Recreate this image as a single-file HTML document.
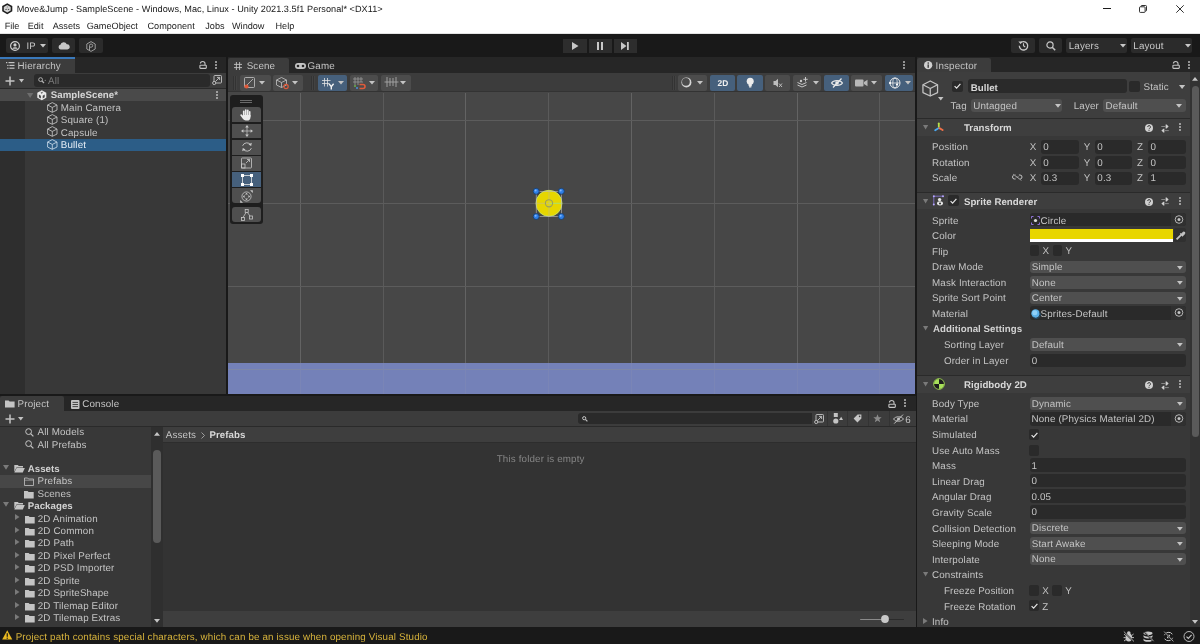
<!DOCTYPE html>
<html><head><meta charset="utf-8">
<style>
*{box-sizing:border-box}
html,body{margin:0;padding:0}
body{width:1200px;height:644px;position:relative;overflow:hidden;background:#191919;font-family:"Liberation Sans",sans-serif;color:#c4c4c4;font-size:10px;text-rendering:geometricPrecision}
.a{position:absolute}
.t{position:absolute;white-space:pre;line-height:1}
svg{position:absolute;overflow:visible}
</style></head><body><div id="root" style="position:absolute;left:0;top:0;width:1200px;height:644px;will-change:transform">
<div class="a" style="left:0px;top:0px;width:1200px;height:34px;background:#ffffff;"></div>
<div class="a" style="left:0px;top:33px;width:1200px;height:1px;background:#e3e3e3;"></div>
<svg style="left:2.2px;top:2.8px;" width="10.5" height="11.4" viewBox="0 0 10.5 11.4"><path d="M5.25 0.2L10.3 3.05V8.35L5.25 11.2L0.2 8.35V3.05Z" fill="#1e1e1e"/><path d="M5.25 1.9L8.7 3.9V7.5L5.25 9.5L1.8 7.5V3.9Z" fill="#d4d4d4"/><path d="M5.25 2.9L5.9 4.4H4.6Z" fill="#6a6a6a"/><path d="M2.9 6.2L4.6 5.8V7Z M7.6 6.2L5.9 5.8V7Z" fill="#2a2a2a"/></svg>
<div class="t" style="left:16.7px;top:5px;font-size:9.15px;color:#161616;letter-spacing:0.05px;">Move&amp;Jump - SampleScene - Windows, Mac, Linux - Unity 2021.3.5f1 Personal* &lt;DX11&gt;</div>
<div class="t" style="left:4.7px;top:22px;font-size:9.15px;color:#1b1b1b;">File</div>
<div class="t" style="left:27.7px;top:22px;font-size:9.15px;color:#1b1b1b;">Edit</div>
<div class="t" style="left:52.7px;top:22px;font-size:9.15px;color:#1b1b1b;">Assets</div>
<div class="t" style="left:86.7px;top:22px;font-size:9.15px;color:#1b1b1b;">GameObject</div>
<div class="t" style="left:147.5px;top:22px;font-size:9.15px;color:#1b1b1b;">Component</div>
<div class="t" style="left:205.3px;top:22px;font-size:9.15px;color:#1b1b1b;">Jobs</div>
<div class="t" style="left:232px;top:22px;font-size:9.15px;color:#1b1b1b;">Window</div>
<div class="t" style="left:275.5px;top:22px;font-size:9.15px;color:#1b1b1b;">Help</div>
<div class="a" style="left:1103px;top:8px;width:8px;height:1px;background:#1b1b1b;"></div>
<svg style="left:1139px;top:5px;" width="8" height="8" viewBox="0 0 8 8"><rect x="0.5" y="1.8" width="5.6" height="5.6" rx="0.8" fill="none" stroke="#1b1b1b" stroke-width="0.9"/><path d="M2 1.6V1.4A0.9 0.9 0 0 1 2.9 0.5H6.6A0.9 0.9 0 0 1 7.5 1.4V5.2A0.9 0.9 0 0 1 6.6 6.1H6.4" fill="none" stroke="#1b1b1b" stroke-width="0.9"/></svg>
<svg style="left:1176px;top:5px;" width="8" height="8" viewBox="0 0 8 8"><path d="M0.3 0.3L7.7 7.7M7.7 0.3L0.3 7.7" stroke="#1b1b1b" stroke-width="0.9"/></svg>
<div class="a" style="left:0px;top:34px;width:1200px;height:23px;background:#191919;"></div>
<div class="a" style="left:6px;top:38px;width:42px;height:15px;background:#2b2b2b;border-radius:2px"></div>
<div class="a" style="left:52px;top:38px;width:23px;height:15px;background:#2b2b2b;border-radius:2px"></div>
<div class="a" style="left:79px;top:38px;width:23.5px;height:15px;background:#2b2b2b;border-radius:2px"></div>
<svg style="left:10px;top:40.5px;" width="10" height="10" viewBox="0 0 10 10"><circle cx="5" cy="5" r="4.4" fill="none" stroke="#cfcfcf" stroke-width="1.2"/><circle cx="5" cy="3.9" r="1.6" fill="#cfcfcf"/><path d="M2.3 7.4A2.9 2 0 0 1 7.7 7.4V7.8H2.3Z" fill="#cfcfcf"/></svg>
<div class="t" style="left:26.5px;top:42px;font-size:9.5px;color:#c8c8c8;">IP</div>
<svg style="left:40px;top:44px;" width="6" height="3.5" viewBox="0 0 6 3.5"><path d="M0 0H6L3.0 3.5Z" fill="#c8c8c8"/></svg>
<svg style="left:58px;top:41px;" width="12" height="9" viewBox="0 0 12 9"><path d="M2.6 8.4A2.4 2.4 0 0 1 2.4 3.7A3.4 3.4 0 0 1 8.8 3.2A2.6 2.6 0 0 1 9.4 8.4Z" fill="#c8c8c8"/></svg>
<svg style="left:85.5px;top:40.5px;" width="10" height="11" viewBox="0 0 10 11"><path d="M5 0.6L9.2 3V8L5 10.4L0.8 8V3Z" fill="none" stroke="#a8a8a8" stroke-width="0.9"/><path d="M3.5 9.2V4.6A1.6 1.6 0 1 1 5.1 6.2H4" fill="none" stroke="#a8a8a8" stroke-width="0.9"/></svg>
<div class="a" style="left:563px;top:38.5px;width:24px;height:14px;background:#2d2d2d;"></div>
<div class="a" style="left:588.5px;top:38.5px;width:23.5px;height:14px;background:#2d2d2d;"></div>
<div class="a" style="left:614px;top:38.5px;width:23px;height:14px;background:#2d2d2d;"></div>
<svg style="left:572px;top:42px;" width="7" height="8" viewBox="0 0 7 8"><path d="M0 0L6.5 4L0 8Z" fill="#c8c8c8"/></svg>
<div class="a" style="left:597px;top:42px;width:2px;height:8px;background:#c8c8c8;"></div>
<div class="a" style="left:601.3px;top:42px;width:2px;height:8px;background:#c8c8c8;"></div>
<svg style="left:621px;top:42px;" width="8" height="8" viewBox="0 0 8 8"><path d="M0 0L5.5 4L0 8Z" fill="#c8c8c8"/><rect x="6" y="0" width="1.8" height="8" fill="#c8c8c8"/></svg>
<div class="a" style="left:1011.3px;top:38px;width:23.7px;height:14.7px;background:#2b2b2b;border-radius:2px"></div>
<div class="a" style="left:1038.8px;top:38px;width:23.2px;height:14.7px;background:#2b2b2b;border-radius:2px"></div>
<div class="a" style="left:1066.3px;top:38px;width:61.2px;height:14.7px;background:#2b2b2b;border-radius:2px"></div>
<div class="a" style="left:1130.8px;top:38px;width:61.7px;height:14.7px;background:#2b2b2b;border-radius:2px"></div>
<svg style="left:1017.5px;top:40px;" width="11" height="11" viewBox="0 0 11 11"><path d="M2.2 3.2A4.2 4.2 0 1 1 1.3 5.8" fill="none" stroke="#c8c8c8" stroke-width="1.3"/><path d="M0.4 1.4L2.6 4L4.4 1.6Z" fill="#c8c8c8"/><path d="M5.5 3.2V5.8L7.2 7" fill="none" stroke="#c8c8c8" stroke-width="1.1"/></svg>
<svg style="left:1046px;top:40.5px;" width="10" height="10" viewBox="0 0 10 10"><circle cx="4" cy="4" r="3.1" fill="none" stroke="#c8c8c8" stroke-width="1.2"/><path d="M6.2 6.2L9.2 9.2" stroke="#c8c8c8" stroke-width="1.5"/></svg>
<div class="t" style="left:1068.7px;top:42px;font-size:9.8px;color:#c8c8c8;letter-spacing:0.15px;">Layers</div>
<svg style="left:1119.5px;top:44px;" width="6" height="3.5" viewBox="0 0 6 3.5"><path d="M0 0H6L3.0 3.5Z" fill="#c8c8c8"/></svg>
<div class="t" style="left:1133.3px;top:42px;font-size:9.8px;color:#c8c8c8;letter-spacing:0.15px;">Layout</div>
<svg style="left:1184.5px;top:44px;" width="6" height="3.5" viewBox="0 0 6 3.5"><path d="M0 0H6L3.0 3.5Z" fill="#c8c8c8"/></svg>
<div class="a" style="left:0px;top:57px;width:226px;height:337px;background:#383838;"></div>
<div class="a" style="left:0px;top:57px;width:226px;height:16px;background:#262626;"></div>
<div class="a" style="left:0px;top:59px;width:75px;height:14px;background:#3c3c3c;"></div>
<div class="a" style="left:0px;top:57px;width:75px;height:2px;background:#3a79bb;"></div>
<svg style="left:5.5px;top:62px;" width="8.5" height="7" viewBox="0 0 8.5 7"><g fill="#c4c4c4"><rect x="0" y="0" width="1.3" height="1.2"/><rect x="2.5" y="0" width="6" height="1.2"/><rect x="1.2" y="2.8" width="1.3" height="1.2"/><rect x="3.4" y="2.8" width="5.1" height="1.2"/><rect x="1.2" y="5.6" width="1.3" height="1.2"/><rect x="3.4" y="5.6" width="5.1" height="1.2"/></g></svg>
<div class="t" style="left:17.6px;top:62px;font-size:9.8px;color:#c4c4c4;letter-spacing:0.15px;">Hierarchy</div>
<svg style="left:198.5px;top:60.5px;" width="8" height="8" viewBox="0 0 8 8"><path d="M1.4 2.6A2.3 2.1 0 0 1 6 2.6V4" fill="none" stroke="#c4c4c4" stroke-width="1.1"/><rect x="0.9" y="4.2" width="6.4" height="3.2" rx="0.6" fill="none" stroke="#c4c4c4" stroke-width="1.1"/></svg>
<svg style="left:214.8px;top:60.5px;" width="2" height="8" viewBox="0 0 2 8"><circle cx="1" cy="1" r="0.95" fill="#c4c4c4"/><circle cx="1" cy="4" r="0.95" fill="#c4c4c4"/><circle cx="1" cy="7" r="0.95" fill="#c4c4c4"/></svg>
<div class="a" style="left:0px;top:73px;width:226px;height:15px;background:#3c3c3c;"></div>
<svg style="left:5.4px;top:75.5px;" width="10" height="10" viewBox="0 0 10 10"><path d="M5 0.5V9.5M0.5 5H9.5" stroke="#c4c4c4" stroke-width="1.5"/></svg>
<svg style="left:18.6px;top:79px;" width="5" height="3.5" viewBox="0 0 5 3.5"><path d="M0 0H5L2.5 3.5Z" fill="#c4c4c4"/></svg>
<div class="a" style="left:33.5px;top:74.2px;width:176.5px;height:12.5px;background:#2a2a2a;border-radius:3px"></div>
<svg style="left:37.5px;top:77.3px;" width="8" height="7" viewBox="0 0 8 7"><circle cx="2.6" cy="2.6" r="1.9" fill="none" stroke="#b0b0b0" stroke-width="1"/><path d="M4 4L6 6" stroke="#b0b0b0" stroke-width="1.2"/><circle cx="7.2" cy="3.2" r="0.5" fill="#b0b0b0"/></svg>
<div class="t" style="left:48px;top:77px;font-size:9.8px;color:#7b7b7b;letter-spacing:0.15px;">All</div>
<svg style="left:212px;top:75.3px;" width="10" height="10" viewBox="0 0 10 10"><rect x="2" y="0.5" width="7.5" height="7.5" rx="0.8" fill="none" stroke="#c4c4c4" stroke-width="0.9"/><circle cx="2.2" cy="8" r="1.6" fill="#3c3c3c" stroke="#c4c4c4" stroke-width="0.9"/><path d="M3.4 6.6L7.4 2.6M5 2.4H7.6V5" fill="none" stroke="#c4c4c4" stroke-width="0.9"/></svg>
<div class="a" style="left:0px;top:88px;width:25px;height:306px;background:#2e2e2e;"></div>
<div class="a" style="left:0px;top:88px;width:226px;height:0.8px;background:#2a2a2a;"></div>
<div class="a" style="left:0px;top:88.7px;width:226px;height:12.1px;background:#4a4a4a;"></div>
<svg style="left:26.7px;top:92.8px;" width="6.3" height="5" viewBox="0 0 6.3 5"><path d="M0 0H6.3L3.15 5Z" fill="#6e6e6e"/></svg>
<svg style="left:36.7px;top:89.5px;" width="9.6" height="10.5" viewBox="0 0 9.6 10.5"><path d="M4.8 0.3L9.3 2.8V7.8L4.8 10.3L0.3 7.8V2.8Z" fill="#ececec"/><path d="M3.4 1.6L4.8 2.6L6.2 1.6L4.8 3.9Z" fill="#474747"/><path d="M1.9 4.6L3.9 5.8V8.4L1.9 7.2Z" fill="#474747"/><path d="M7.7 4.6L5.7 5.8V8.4L7.7 7.2Z" fill="#474747"/></svg>
<div class="t" style="left:50.7px;top:91px;font-size:9.7px;color:#d6d6d6;font-weight:bold;letter-spacing:0.05px;">SampleScene*</div>
<svg style="left:215.7px;top:90.5px;" width="2" height="8" viewBox="0 0 2 8"><circle cx="1" cy="1" r="0.95" fill="#c4c4c4"/><circle cx="1" cy="4" r="0.95" fill="#c4c4c4"/><circle cx="1" cy="7" r="0.95" fill="#c4c4c4"/></svg>
<div class="a" style="left:0px;top:138.7px;width:226px;height:12.4px;background:#2c5d87;"></div>
<svg style="left:47.3px;top:101.5px;" width="10.6" height="10.6" viewBox="0 0 10.6 10.6"><g transform="scale(1.0095238095238095)" fill="none" stroke="#c4c4c4" stroke-width="0.85" stroke-linejoin="round"><path d="M5.25 0.6L9.9 3V8L5.25 10.2L0.6 8V3Z"/><path d="M0.6 3L5.25 5.4L9.9 3M5.25 5.4V10.2"/></g></svg>
<div class="t" style="left:60.85px;top:104px;font-size:9.8px;color:#c4c4c4;letter-spacing:0.12px;">Main Camera</div>
<svg style="left:47.3px;top:113.95px;" width="10.6" height="10.6" viewBox="0 0 10.6 10.6"><g transform="scale(1.0095238095238095)" fill="none" stroke="#c4c4c4" stroke-width="0.85" stroke-linejoin="round"><path d="M5.25 0.6L9.9 3V8L5.25 10.2L0.6 8V3Z"/><path d="M0.6 3L5.25 5.4L9.9 3M5.25 5.4V10.2"/></g></svg>
<div class="t" style="left:60.85px;top:116px;font-size:9.8px;color:#c4c4c4;letter-spacing:0.12px;">Square (1)</div>
<svg style="left:47.3px;top:126.39999999999999px;" width="10.6" height="10.6" viewBox="0 0 10.6 10.6"><g transform="scale(1.0095238095238095)" fill="none" stroke="#c4c4c4" stroke-width="0.85" stroke-linejoin="round"><path d="M5.25 0.6L9.9 3V8L5.25 10.2L0.6 8V3Z"/><path d="M0.6 3L5.25 5.4L9.9 3M5.25 5.4V10.2"/></g></svg>
<div class="t" style="left:60.85px;top:129px;font-size:9.8px;color:#c4c4c4;letter-spacing:0.12px;">Capsule</div>
<svg style="left:47.3px;top:138.85000000000002px;" width="10.6" height="10.6" viewBox="0 0 10.6 10.6"><g transform="scale(1.0095238095238095)" fill="none" stroke="#c8d8e8" stroke-width="0.85" stroke-linejoin="round"><path d="M5.25 0.6L9.9 3V8L5.25 10.2L0.6 8V3Z"/><path d="M0.6 3L5.25 5.4L9.9 3M5.25 5.4V10.2"/></g></svg>
<div class="t" style="left:60.85px;top:141px;font-size:9.8px;color:#e6eef6;letter-spacing:0.12px;">Bullet</div>
<div class="a" style="left:227.5px;top:57px;width:687.5px;height:337px;background:#474747;"></div>
<div class="a" style="left:227.5px;top:57px;width:687.5px;height:16px;background:#262626;"></div>
<div class="a" style="left:228px;top:58px;width:61px;height:15px;background:#3c3c3c;border-radius:2px 2px 0 0"></div>
<svg style="left:234.3px;top:62px;" width="8" height="8" viewBox="0 0 8 8"><path d="M2.4 0V8M5.6 0V8M0 2.4H8M0 5.6H8" stroke="#c4c4c4" stroke-width="0.9"/></svg>
<div class="t" style="left:246.7px;top:62px;font-size:9.8px;color:#c4c4c4;letter-spacing:0.15px;">Scene</div>
<svg style="left:294.5px;top:62.5px;" width="11" height="6" viewBox="0 0 11 6"><rect x="0" y="0" width="11" height="6" rx="3" fill="#c4c4c4"/><circle cx="3" cy="3" r="1.3" fill="#262626"/><circle cx="8" cy="3" r="1.3" fill="#262626"/></svg>
<div class="t" style="left:307.6px;top:62px;font-size:9.8px;color:#c4c4c4;letter-spacing:0.15px;">Game</div>
<svg style="left:902.8px;top:60.5px;" width="2" height="8" viewBox="0 0 2 8"><circle cx="1" cy="1" r="0.95" fill="#c4c4c4"/><circle cx="1" cy="4" r="0.95" fill="#c4c4c4"/><circle cx="1" cy="7" r="0.95" fill="#c4c4c4"/></svg>
<div class="a" style="left:227.5px;top:73px;width:687.5px;height:18.5px;background:#3c3c3c;"></div>
<div class="a" style="left:227.5px;top:91px;width:687.5px;height:1px;background:#333333;"></div>
<svg style="left:232.5px;top:75.5px;" width="4" height="14" viewBox="0 0 4 14"><path d="M0.5 0V14M2.5 0V14" stroke="#2e2e2e" stroke-width="0.8"/><path d="M1.3 0V14M3.3 0V14" stroke="#4a4a4a" stroke-width="0.6"/></svg>
<svg style="left:310.5px;top:75.5px;" width="4" height="14" viewBox="0 0 4 14"><path d="M0.5 0V14M2.5 0V14" stroke="#2e2e2e" stroke-width="0.8"/><path d="M1.3 0V14M3.3 0V14" stroke="#4a4a4a" stroke-width="0.6"/></svg>
<svg style="left:671.5px;top:75.5px;" width="4" height="14" viewBox="0 0 4 14"><path d="M0.5 0V14M2.5 0V14" stroke="#2e2e2e" stroke-width="0.8"/><path d="M1.3 0V14M3.3 0V14" stroke="#4a4a4a" stroke-width="0.6"/></svg>
<div class="a" style="left:240.3px;top:75px;width:30.4px;height:15.5px;background:#4c4c4c;border-radius:2px"></div>
<svg style="left:259.0px;top:81px;" width="6" height="3.6" viewBox="0 0 6 3.6"><path d="M0 0H6L3.0 3.6Z" fill="#c4c4c4"/></svg>
<div class="a" style="left:273px;top:75px;width:30px;height:15.5px;background:#4c4c4c;border-radius:2px"></div>
<svg style="left:292.3px;top:81px;" width="6" height="3.6" viewBox="0 0 6 3.6"><path d="M0 0H6L3.0 3.6Z" fill="#c4c4c4"/></svg>
<div class="a" style="left:318px;top:75px;width:29px;height:15.5px;background:#46607c;border-radius:2px"></div>
<svg style="left:338.2px;top:81px;" width="6" height="3.6" viewBox="0 0 6 3.6"><path d="M0 0H6L3.0 3.6Z" fill="#c4c4c4"/></svg>
<div class="a" style="left:349.6px;top:75px;width:28.4px;height:15.5px;background:#4c4c4c;border-radius:2px"></div>
<svg style="left:369.4px;top:81px;" width="6" height="3.6" viewBox="0 0 6 3.6"><path d="M0 0H6L3.0 3.6Z" fill="#c4c4c4"/></svg>
<div class="a" style="left:380.8px;top:75px;width:30.1px;height:15.5px;background:#4c4c4c;border-radius:2px"></div>
<svg style="left:400.00000000000006px;top:81px;" width="6" height="3.6" viewBox="0 0 6 3.6"><path d="M0 0H6L3.0 3.6Z" fill="#c4c4c4"/></svg>
<svg style="left:243.5px;top:76.5px;" width="13" height="12" viewBox="0 0 13 12"><rect x="0.5" y="0.5" width="10" height="10" rx="1" fill="none" stroke="#c4c4c4" stroke-width="0.8"/><path d="M3 8L9 2" stroke="#c4c4c4" stroke-width="0.8"/><circle cx="2.5" cy="9.5" r="2.1" fill="#e05a3a"/></svg>
<svg style="left:276px;top:76.5px;" width="14" height="12" viewBox="0 0 14 12"><path d="M5.5 0.5L10.5 3V8L5.5 10.5L0.5 8V3Z" fill="none" stroke="#c4c4c4" stroke-width="0.8"/><path d="M0.5 3L5.5 5.5L10.5 3M5.5 5.5V10.5" fill="none" stroke="#c4c4c4" stroke-width="0.8"/><circle cx="10" cy="9.5" r="2.2" fill="none" stroke="#e05a3a" stroke-width="1.2"/></svg>
<svg style="left:321.5px;top:77.5px;" width="13" height="12" viewBox="0 0 13 12"><path d="M2.5 0V8.5M5.5 0V8.5M0 2.5H8.5M0 5.5H7" stroke="#e8e8e8" stroke-width="0.75"/><path d="M7 5.8L9.3 8.6L11.6 5.8M9.3 8.6V11.6" fill="none" stroke="#f4f4f4" stroke-width="1.4"/></svg>
<svg style="left:352.5px;top:76.5px;" width="14" height="12" viewBox="0 0 14 12"><path d="M2 0V8M5 0V8M8 0V5M0 2H10M0 5H10" stroke="#9a9a9a" stroke-width="0.8"/><path d="M6.5 7.5H10A2 2 0 0 1 10 11.5H6.5" fill="none" stroke="#e05a3a" stroke-width="1.6"/><circle cx="2" cy="9" r="1" fill="#6ab04c"/><circle cx="4" cy="11" r="1" fill="#4a8fd8"/></svg>
<svg style="left:383.5px;top:77px;" width="15" height="10" viewBox="0 0 15 10"><path d="M0.5 5H14.5M3 0V10M6 1V9M9 1V9M12 0V10" stroke="#a8a8a8" stroke-width="0.9"/></svg>
<div class="a" style="left:677.9px;top:75px;width:29.6px;height:15.5px;background:#4c4c4c;border-radius:2px"></div>
<svg style="left:697.2px;top:81px;" width="6" height="3.6" viewBox="0 0 6 3.6"><path d="M0 0H6L3.0 3.6Z" fill="#c4c4c4"/></svg>
<div class="a" style="left:710px;top:75px;width:25px;height:15.5px;background:#46607c;border-radius:2px"></div>
<div class="a" style="left:736.7px;top:75px;width:26px;height:15.5px;background:#46607c;border-radius:2px"></div>
<div class="a" style="left:765.4px;top:75px;width:24.4px;height:15.5px;background:#4c4c4c;border-radius:2px"></div>
<div class="a" style="left:792.5px;top:75px;width:28.5px;height:15.5px;background:#4c4c4c;border-radius:2px"></div>
<svg style="left:812.8px;top:81px;" width="6" height="3.6" viewBox="0 0 6 3.6"><path d="M0 0H6L3.0 3.6Z" fill="#c4c4c4"/></svg>
<div class="a" style="left:824px;top:75px;width:24.75px;height:15.5px;background:#46607c;border-radius:2px"></div>
<div class="a" style="left:851px;top:75px;width:30.5px;height:15.5px;background:#4c4c4c;border-radius:2px"></div>
<svg style="left:871.2px;top:81px;" width="6" height="3.6" viewBox="0 0 6 3.6"><path d="M0 0H6L3.0 3.6Z" fill="#c4c4c4"/></svg>
<div class="a" style="left:884.6px;top:75px;width:28.1px;height:15.5px;background:#46607c;border-radius:2px"></div>
<svg style="left:904.5px;top:81px;" width="6" height="3.6" viewBox="0 0 6 3.6"><path d="M0 0H6L3.0 3.6Z" fill="#c4c4c4"/></svg>
<svg style="left:680.8px;top:77px;" width="11" height="11" viewBox="0 0 11 11"><circle cx="5.4" cy="5.4" r="5" fill="#d6d6d6"/><circle cx="4.9" cy="4.8" r="3.9" fill="#4c4c4c"/></svg>
<div class="t" style="left:717.6px;top:79px;font-size:8.4px;color:#f0f0f0;font-weight:bold;">2D</div>
<svg style="left:745.5px;top:77px;" width="9" height="12" viewBox="0 0 9 12"><circle cx="4.2" cy="4.2" r="3.5" fill="#ececec"/><path d="M2.6 6.6H5.8V8.4A1.6 1.2 0 0 1 2.6 8.4Z" fill="#ececec"/><rect x="3" y="9.3" width="2.4" height="1.1" rx="0.5" fill="#ececec"/></svg>
<svg style="left:773px;top:77.5px;" width="10" height="10" viewBox="0 0 10 10"><path d="M0.5 3H2.5L5 0.8V9.2L2.5 7H0.5Z" fill="#bdbdbd"/><path d="M6 5.5L9 9M9 5.5L6 9" stroke="#bdbdbd" stroke-width="1"/></svg>
<svg style="left:797px;top:77px;" width="12" height="11" viewBox="0 0 12 11"><path d="M0.5 5.5L5 7.5L9.5 5.5M0.5 8L5 10L9.5 8" fill="none" stroke="#c8c8c8" stroke-width="1"/><path d="M8.5 0V4.5M6.3 2.3H10.7" stroke="#c8c8c8" stroke-width="1"/><circle cx="4" cy="4" r="1.2" fill="#c8c8c8"/></svg>
<svg style="left:830.5px;top:77.5px;" width="12" height="10" viewBox="0 0 12 10"><path d="M0.5 5C2.5 1.8 9.5 1.8 11.5 5C9.5 8.2 2.5 8.2 0.5 5Z" fill="none" stroke="#eaeaea" stroke-width="1.1"/><circle cx="6" cy="5" r="1.8" fill="#eaeaea"/><path d="M2 9.5L10.5 0.5" stroke="#eaeaea" stroke-width="1.2"/></svg>
<svg style="left:855px;top:78.5px;" width="13" height="8" viewBox="0 0 13 8"><rect x="0" y="0.5" width="8.5" height="7" rx="1" fill="#b8b8b8"/><path d="M9 3L12.5 0.8V7.2L9 5Z" fill="#b8b8b8"/></svg>
<svg style="left:888.5px;top:76.5px;" width="13" height="13" viewBox="0 0 13 13"><circle cx="6" cy="6" r="5" fill="none" stroke="#eaeaea" stroke-width="1"/><ellipse cx="6" cy="6" rx="2.2" ry="5" fill="none" stroke="#eaeaea" stroke-width="0.8"/><path d="M1 6H11" stroke="#eaeaea" stroke-width="0.8"/><circle cx="1" cy="6" r="1.1" fill="#fff"/><circle cx="8" cy="7.5" r="1.1" fill="#fff"/></svg>
<div class="a" style="left:300px;top:92.5px;width:1px;height:270.5px;background:#636363;"></div>
<div class="a" style="left:383px;top:92.5px;width:1px;height:270.5px;background:#5a5a5a;"></div>
<div class="a" style="left:465px;top:92.5px;width:1px;height:270.5px;background:#636363;"></div>
<div class="a" style="left:548px;top:92.5px;width:1px;height:270.5px;background:#5a5a5a;"></div>
<div class="a" style="left:631px;top:92.5px;width:1px;height:270.5px;background:#636363;"></div>
<div class="a" style="left:714px;top:92.5px;width:1px;height:270.5px;background:#5a5a5a;"></div>
<div class="a" style="left:797px;top:92.5px;width:1px;height:270.5px;background:#636363;"></div>
<div class="a" style="left:879px;top:92.5px;width:1px;height:270.5px;background:#5a5a5a;"></div>
<div class="a" style="left:227.5px;top:120px;width:687.5px;height:1px;background:#5c5c5c;"></div>
<div class="a" style="left:227.5px;top:203px;width:687.5px;height:1px;background:#5c5c5c;"></div>
<div class="a" style="left:227.5px;top:286px;width:687.5px;height:1px;background:#5c5c5c;"></div>
<div class="a" style="left:227.5px;top:363px;width:687.5px;height:31px;background:#7481b8;"></div>
<div class="a" style="left:227.5px;top:369px;width:687.5px;height:1px;background:#7f88a8;"></div>
<div class="a" style="left:300px;top:363px;width:1px;height:31px;background:#7a85b6;"></div>
<div class="a" style="left:383px;top:363px;width:1px;height:31px;background:#7a85b6;"></div>
<div class="a" style="left:465px;top:363px;width:1px;height:31px;background:#7a85b6;"></div>
<div class="a" style="left:548px;top:363px;width:1px;height:31px;background:#7a85b6;"></div>
<div class="a" style="left:631px;top:363px;width:1px;height:31px;background:#7a85b6;"></div>
<div class="a" style="left:714px;top:363px;width:1px;height:31px;background:#7a85b6;"></div>
<div class="a" style="left:797px;top:363px;width:1px;height:31px;background:#7a85b6;"></div>
<div class="a" style="left:879px;top:363px;width:1px;height:31px;background:#7a85b6;"></div>
<div class="a" style="left:230px;top:95px;width:33px;height:129px;background:#1e1e1e;border-radius:3px"></div>
<div class="a" style="left:240px;top:99.5px;width:12px;height:1px;background:#6a6a6a;"></div>
<div class="a" style="left:240px;top:102.3px;width:12px;height:1px;background:#6a6a6a;"></div>
<div class="a" style="left:232px;top:106.8px;width:29px;height:15.200000000000003px;background:#4f4f4f;border-radius:3px 3px 0 0"></div>
<div class="a" style="left:232px;top:123.6px;width:29px;height:14.900000000000006px;background:#4f4f4f;border-radius:0"></div>
<div class="a" style="left:232px;top:140px;width:29px;height:15px;background:#4f4f4f;border-radius:0"></div>
<div class="a" style="left:232px;top:155.8px;width:29px;height:14.799999999999983px;background:#4f4f4f;border-radius:0"></div>
<div class="a" style="left:232px;top:171.7px;width:29px;height:15.600000000000023px;background:#46607c;border-radius:0"></div>
<div class="a" style="left:232px;top:188.4px;width:29px;height:14.599999999999994px;background:#4f4f4f;border-radius:0 0 3px 3px"></div>
<div class="a" style="left:232px;top:206.5px;width:29px;height:15.5px;background:#4f4f4f;border-radius:3px"></div>
<svg style="left:240.2px;top:108.8px;" width="12" height="12" viewBox="0 0 12 12"><g fill="#ececec"><rect x="2.9" y="1.6" width="1.7" height="6" rx="0.85"/><rect x="4.9" y="0.2" width="1.7" height="7" rx="0.85"/><rect x="6.9" y="0.6" width="1.7" height="7" rx="0.85"/><rect x="8.9" y="2" width="1.6" height="6" rx="0.8"/><path d="M2.9 6H10.5V8.2A3.6 3.6 0 0 1 6.9 11.6H5.8A3.4 3.4 0 0 1 3 10.1L0.4 6.6A0.9 0.9 0 0 1 1.8 5.5L2.9 6.8Z"/></g></svg>
<svg style="left:240.5px;top:124.8px;" width="12" height="12" viewBox="0 0 12 12"><path d="M6 2V10M2 6H10" stroke="#c8c8c8" stroke-width="0.7"/><path d="M6 0L7.8 2.4H4.2ZM6 12L7.8 9.6H4.2ZM0 6L2.4 4.2V7.8ZM12 6L9.6 4.2V7.8Z" fill="#c8c8c8"/></svg>
<svg style="left:240.5px;top:141px;" width="12" height="12" viewBox="0 0 12 12"><path d="M9.8 4A4.6 4.6 0 0 0 1.6 4.8M2.2 8A4.6 4.6 0 0 0 10.4 7.2" fill="none" stroke="#c8c8c8" stroke-width="0.9"/><path d="M10.8 1.8L10.2 5L7.4 3.6ZM1.2 10.2L1.8 7L4.6 8.4Z" fill="#c8c8c8"/></svg>
<svg style="left:241px;top:157px;" width="11" height="12" viewBox="0 0 11 12"><rect x="0.5" y="1" width="10" height="10" rx="0.8" fill="none" stroke="#c8c8c8" stroke-width="0.8"/><rect x="0.5" y="7" width="3.5" height="4" fill="none" stroke="#c8c8c8" stroke-width="0.8"/><path d="M5 6L8.5 2.5M6 2.5H8.5V5" fill="none" stroke="#c8c8c8" stroke-width="0.8"/></svg>
<svg style="left:240.5px;top:173.5px;" width="12" height="12" viewBox="0 0 12 12"><rect x="1.5" y="1.5" width="9" height="9" fill="none" stroke="#e8e8e8" stroke-width="0.8"/><rect x="0" y="0" width="3" height="3" fill="#fff"/><rect x="9" y="0" width="3" height="3" fill="#fff"/><rect x="0" y="9" width="3" height="3" fill="#fff"/><rect x="9" y="9" width="3" height="3" fill="#fff"/></svg>
<svg style="left:240px;top:189.5px;" width="13" height="13" viewBox="0 0 13 13"><circle cx="6.5" cy="6.5" r="4.6" fill="none" stroke="#c8c8c8" stroke-width="0.8"/><path d="M6.5 2.8L8 4.6H5ZM6.5 10.2L8 8.4H5ZM2.8 6.5L4.6 5V8ZM10.2 6.5L8.4 5V8Z" fill="#c8c8c8"/><path d="M12.8 0.2V3L10 0.2ZM0.2 12.8V10L3 12.8Z" fill="#c8c8c8"/></svg>
<svg style="left:240.5px;top:208.5px;" width="12" height="12" viewBox="0 0 12 12"><rect x="4.2" y="0.5" width="3" height="3" fill="none" stroke="#c8c8c8" stroke-width="0.8"/><rect x="0.5" y="8.5" width="3" height="3" fill="none" stroke="#c8c8c8" stroke-width="0.8"/><rect x="8.5" y="7" width="3" height="3" fill="none" stroke="#c8c8c8" stroke-width="0.8"/><path d="M2 8.5L5 3.5M6.5 3.5L9 7" stroke="#c8c8c8" stroke-width="0.8"/></svg>
<svg style="left:530px;top:185px;" width="38" height="38" viewBox="0 0 38 38"><circle cx="19" cy="18.3" r="13" fill="#e6d600" stroke="#c9e86a" stroke-width="0.8"/>
<path d="M19 5.3V31.3" stroke="#c8c070" stroke-width="0.8"/>
<path d="M6 18.3H19" stroke="#c8c070" stroke-width="0.8"/>
<path d="M19 18.3H32" stroke="#a8e070" stroke-width="1"/>
<circle cx="19" cy="18.3" r="3.6" fill="none" stroke="#9aa060" stroke-width="1.1"/>
<rect x="6.2" y="6.3" width="25.1" height="25.2" fill="none" stroke="#bdbdbd" stroke-width="0.6"/>
<g fill="#2f7fe6" stroke="#163a66" stroke-width="0.8"><circle cx="6.2" cy="6.3" r="3"/><circle cx="31.3" cy="6.3" r="3"/><circle cx="6.2" cy="31.5" r="3"/><circle cx="31.3" cy="31.5" r="3"/></g>
<g fill="#7fb6ff"><circle cx="5.6" cy="5.5" r="1"/><circle cx="30.7" cy="5.5" r="1"/><circle cx="5.6" cy="30.7" r="1"/><circle cx="30.7" cy="30.7" r="1"/></g>
</svg>
<div class="a" style="left:0px;top:396px;width:916px;height:231px;background:#333333;"></div>
<div class="a" style="left:0px;top:396px;width:916px;height:14.5px;background:#262626;"></div>
<div class="a" style="left:0px;top:396px;width:63.6px;height:14.5px;background:#3c3c3c;border-radius:2px 2px 0 0"></div>
<svg style="left:4.9px;top:400px;" width="10" height="8" viewBox="0 0 10 8"><path d="M0 0.5H3.6L4.6 1.6H9.6V7.6H0Z" fill="#c4c4c4"/></svg>
<div class="t" style="left:17.6px;top:400px;font-size:9.8px;color:#c4c4c4;letter-spacing:0.15px;">Project</div>
<svg style="left:70.9px;top:399.5px;" width="8.5" height="9" viewBox="0 0 8.5 9"><rect x="0" y="0" width="8.5" height="9" rx="1" fill="#c4c4c4"/><path d="M1.5 2.4H7M1.5 4.5H7M1.5 6.6H7" stroke="#262626" stroke-width="0.8"/></svg>
<div class="t" style="left:82.3px;top:400px;font-size:9.8px;color:#c4c4c4;letter-spacing:0.15px;">Console</div>
<svg style="left:888px;top:399.5px;" width="8" height="8" viewBox="0 0 8 8"><path d="M1.4 2.6A2.3 2.1 0 0 1 6 2.6V4" fill="none" stroke="#c4c4c4" stroke-width="1.1"/><rect x="0.9" y="4.2" width="6.4" height="3.2" rx="0.6" fill="none" stroke="#c4c4c4" stroke-width="1.1"/></svg>
<svg style="left:903.8px;top:398.5px;" width="2" height="8" viewBox="0 0 2 8"><circle cx="1" cy="1" r="0.95" fill="#c4c4c4"/><circle cx="1" cy="4" r="0.95" fill="#c4c4c4"/><circle cx="1" cy="7" r="0.95" fill="#c4c4c4"/></svg>
<div class="a" style="left:0px;top:410.5px;width:916px;height:15.8px;background:#3c3c3c;"></div>
<svg style="left:4.9px;top:413.5px;" width="10" height="10" viewBox="0 0 10 10"><path d="M5 0.5V9.5M0.5 5H9.5" stroke="#c4c4c4" stroke-width="1.5"/></svg>
<svg style="left:17.9px;top:416.8px;" width="5.5" height="3.5" viewBox="0 0 5.5 3.5"><path d="M0 0H5.5L2.75 3.5Z" fill="#c4c4c4"/></svg>
<div class="a" style="left:578px;top:413px;width:234px;height:11.3px;background:#2a2a2a;border-radius:3px 0 0 3px"></div>
<svg style="left:581.5px;top:415.5px;" width="7" height="6" viewBox="0 0 7 6"><circle cx="2.2" cy="2.2" r="1.6" fill="none" stroke="#c4c4c4" stroke-width="1"/><path d="M3.4 3.4L5.4 5.4" stroke="#c4c4c4" stroke-width="1.2"/></svg>
<div class="a" style="left:826.7px;top:411px;width:0.8px;height:15px;background:#333333;"></div>
<div class="a" style="left:847.3px;top:411px;width:0.8px;height:15px;background:#333333;"></div>
<div class="a" style="left:868px;top:411px;width:0.8px;height:15px;background:#333333;"></div>
<div class="a" style="left:888.7px;top:411px;width:0.8px;height:15px;background:#333333;"></div>
<svg style="left:814.3px;top:413.5px;" width="10" height="10" viewBox="0 0 10 10"><rect x="2" y="0.5" width="7.5" height="7.5" rx="0.8" fill="none" stroke="#c4c4c4" stroke-width="0.9"/><circle cx="2.2" cy="8" r="1.6" fill="#3c3c3c" stroke="#c4c4c4" stroke-width="0.9"/><path d="M3.4 6.6L7.4 2.6M5 2.4H7.6V5" fill="none" stroke="#c4c4c4" stroke-width="0.9"/></svg>
<svg style="left:832.7px;top:413px;" width="10" height="11" viewBox="0 0 10 11"><rect x="0.8" y="0" width="4" height="4" fill="#c4c4c4"/><circle cx="2.8" cy="8" r="2.6" fill="#c4c4c4"/><path d="M6 7L8.2 3.8L10 7Z" fill="#c4c4c4"/></svg>
<svg style="left:852.7px;top:413.5px;" width="9" height="9" viewBox="0 0 9 9"><path d="M0.6 4.6L4.6 0.6H8.4V4.4L4.4 8.4Z" fill="#c4c4c4"/><circle cx="6.6" cy="2.4" r="0.8" fill="#3c3c3c"/></svg>
<svg style="left:873.3px;top:413.5px;" width="9" height="9" viewBox="0 0 9 9"><path d="M4.5 0.3L5.7 3.2L8.7 3.3L6.3 5.2L7.2 8.3L4.5 6.5L1.8 8.3L2.7 5.2L0.3 3.3L3.3 3.2Z" fill="#8a8a8a"/></svg>
<svg style="left:893.3px;top:413.5px;" width="12" height="10" viewBox="0 0 12 10"><path d="M0.5 5C2.5 2 8.5 2 10.5 5C8.5 8 2.5 8 0.5 5Z" fill="none" stroke="#c4c4c4" stroke-width="0.9"/><circle cx="5.5" cy="5" r="1.5" fill="#c4c4c4"/><path d="M1.2 9.6L10 0.6" stroke="#c4c4c4" stroke-width="1"/></svg>
<div class="t" style="left:905.3px;top:416px;font-size:9.8px;color:#c4c4c4;letter-spacing:0.15px;">6</div>
<div class="a" style="left:0px;top:426.3px;width:151px;height:200.7px;background:#383838;"></div>
<div class="a" style="left:151px;top:426.3px;width:11.5px;height:200.7px;background:#2f2f2f;"></div>
<div class="a" style="left:152.8px;top:450.4px;width:8.4px;height:92.5px;background:#5a5a5a;border-radius:4px"></div>
<svg style="left:154.3px;top:618.5px;" width="6" height="4" viewBox="0 0 6 4"><path d="M0 0H6L3 3.8Z" fill="#c4c4c4"/></svg>
<svg style="left:154.3px;top:431.6px;" width="6" height="4" viewBox="0 0 6 4"><path d="M0 3.8H6L3 0Z" fill="#c4c4c4"/></svg>
<svg style="left:24.8px;top:427.5px;" width="9" height="9" viewBox="0 0 9 9"><circle cx="3.6" cy="3.6" r="2.9" fill="none" stroke="#c4c4c4" stroke-width="1"/><path d="M5.6 5.6L8.4 8.4" stroke="#c4c4c4" stroke-width="1.2"/></svg>
<div class="t" style="left:37.5px;top:428px;font-size:9.8px;color:#c4c4c4;letter-spacing:0.15px;">All Models</div>
<svg style="left:24.8px;top:440px;" width="9" height="9" viewBox="0 0 9 9"><circle cx="3.6" cy="3.6" r="2.9" fill="none" stroke="#c4c4c4" stroke-width="1"/><path d="M5.6 5.6L8.4 8.4" stroke="#c4c4c4" stroke-width="1.2"/></svg>
<div class="t" style="left:37.5px;top:441px;font-size:9.8px;color:#c4c4c4;letter-spacing:0.15px;">All Prefabs</div>
<svg style="left:3.3px;top:464.8px;" width="6" height="4.8" viewBox="0 0 6 4.8"><path d="M0 0H6L3.0 4.8Z" fill="#7a7a7a"/></svg>
<svg style="left:13.9px;top:463.5px;" width="11" height="9" viewBox="0 0 11 9"><path d="M0.3 1H3.8L4.8 2H9V3.4H2.4L0.3 8Z" fill="#c4c4c4"/><path d="M0.3 8.5L2.6 4H10.8L8.8 8.5Z" fill="#c4c4c4"/></svg>
<div class="t" style="left:27.7px;top:465px;font-size:9.7px;color:#d2d2d2;font-weight:bold;letter-spacing:0.05px;">Assets</div>
<div class="a" style="left:0px;top:474.9px;width:151px;height:13px;background:#474747;"></div>
<svg style="left:24.3px;top:477.3px;" width="10" height="9" viewBox="0 0 10 9"><path d="M0.5 1H3.6L4.6 2H9.5V8.5H0.5Z" fill="none" stroke="#c4c4c4" stroke-width="0.8"/><path d="M0.5 3.2H9.5" stroke="#c4c4c4" stroke-width="0.6"/></svg>
<div class="t" style="left:37.5px;top:477px;font-size:9.8px;color:#c4c4c4;letter-spacing:0.15px;">Prefabs</div>
<svg style="left:24.3px;top:489.8px;" width="10" height="9" viewBox="0 0 10 9"><path d="M0 1H3.6L4.6 2H9.7V8.6H0Z" fill="#c4c4c4"/></svg>
<div class="t" style="left:37.5px;top:490px;font-size:9.8px;color:#c4c4c4;letter-spacing:0.15px;">Scenes</div>
<svg style="left:3.3px;top:502.3px;" width="6" height="4.8" viewBox="0 0 6 4.8"><path d="M0 0H6L3.0 4.8Z" fill="#7a7a7a"/></svg>
<svg style="left:13.9px;top:501px;" width="11" height="9" viewBox="0 0 11 9"><path d="M0.3 1H3.8L4.8 2H9V3.4H2.4L0.3 8Z" fill="#c4c4c4"/><path d="M0.3 8.5L2.6 4H10.8L8.8 8.5Z" fill="#c4c4c4"/></svg>
<div class="t" style="left:27.7px;top:502px;font-size:9.7px;color:#d2d2d2;font-weight:bold;letter-spacing:0.05px;">Packages</div>
<svg style="left:14.5px;top:514.2px;" width="4.5" height="6" viewBox="0 0 4.5 6"><path d="M0 0L4.5 3.0L0 6Z" fill="#7a7a7a"/></svg>
<svg style="left:24.8px;top:514.5px;" width="10" height="9" viewBox="0 0 10 9"><path d="M0 1H3.6L4.6 2H9.7V8.6H0Z" fill="#c4c4c4"/></svg>
<div class="t" style="left:37.7px;top:515px;font-size:9.8px;color:#c4c4c4;letter-spacing:0.15px;">2D Animation</div>
<svg style="left:14.5px;top:526.69px;" width="4.5" height="6" viewBox="0 0 4.5 6"><path d="M0 0L4.5 3.0L0 6Z" fill="#7a7a7a"/></svg>
<svg style="left:24.8px;top:526.99px;" width="10" height="9" viewBox="0 0 10 9"><path d="M0 1H3.6L4.6 2H9.7V8.6H0Z" fill="#c4c4c4"/></svg>
<div class="t" style="left:37.7px;top:527px;font-size:9.8px;color:#c4c4c4;letter-spacing:0.15px;">2D Common</div>
<svg style="left:14.5px;top:539.1800000000001px;" width="4.5" height="6" viewBox="0 0 4.5 6"><path d="M0 0L4.5 3.0L0 6Z" fill="#7a7a7a"/></svg>
<svg style="left:24.8px;top:539.48px;" width="10" height="9" viewBox="0 0 10 9"><path d="M0 1H3.6L4.6 2H9.7V8.6H0Z" fill="#c4c4c4"/></svg>
<div class="t" style="left:37.7px;top:539px;font-size:9.8px;color:#c4c4c4;letter-spacing:0.15px;">2D Path</div>
<svg style="left:14.5px;top:551.6700000000001px;" width="4.5" height="6" viewBox="0 0 4.5 6"><path d="M0 0L4.5 3.0L0 6Z" fill="#7a7a7a"/></svg>
<svg style="left:24.8px;top:551.97px;" width="10" height="9" viewBox="0 0 10 9"><path d="M0 1H3.6L4.6 2H9.7V8.6H0Z" fill="#c4c4c4"/></svg>
<div class="t" style="left:37.7px;top:552px;font-size:9.8px;color:#c4c4c4;letter-spacing:0.15px;">2D Pixel Perfect</div>
<svg style="left:14.5px;top:564.1600000000001px;" width="4.5" height="6" viewBox="0 0 4.5 6"><path d="M0 0L4.5 3.0L0 6Z" fill="#7a7a7a"/></svg>
<svg style="left:24.8px;top:564.46px;" width="10" height="9" viewBox="0 0 10 9"><path d="M0 1H3.6L4.6 2H9.7V8.6H0Z" fill="#c4c4c4"/></svg>
<div class="t" style="left:37.7px;top:564px;font-size:9.8px;color:#c4c4c4;letter-spacing:0.15px;">2D PSD Importer</div>
<svg style="left:14.5px;top:576.6500000000001px;" width="4.5" height="6" viewBox="0 0 4.5 6"><path d="M0 0L4.5 3.0L0 6Z" fill="#7a7a7a"/></svg>
<svg style="left:24.8px;top:576.95px;" width="10" height="9" viewBox="0 0 10 9"><path d="M0 1H3.6L4.6 2H9.7V8.6H0Z" fill="#c4c4c4"/></svg>
<div class="t" style="left:37.7px;top:577px;font-size:9.8px;color:#c4c4c4;letter-spacing:0.15px;">2D Sprite</div>
<svg style="left:14.5px;top:589.1400000000001px;" width="4.5" height="6" viewBox="0 0 4.5 6"><path d="M0 0L4.5 3.0L0 6Z" fill="#7a7a7a"/></svg>
<svg style="left:24.8px;top:589.44px;" width="10" height="9" viewBox="0 0 10 9"><path d="M0 1H3.6L4.6 2H9.7V8.6H0Z" fill="#c4c4c4"/></svg>
<div class="t" style="left:37.7px;top:589px;font-size:9.8px;color:#c4c4c4;letter-spacing:0.15px;">2D SpriteShape</div>
<svg style="left:14.5px;top:601.6300000000001px;" width="4.5" height="6" viewBox="0 0 4.5 6"><path d="M0 0L4.5 3.0L0 6Z" fill="#7a7a7a"/></svg>
<svg style="left:24.8px;top:601.9300000000001px;" width="10" height="9" viewBox="0 0 10 9"><path d="M0 1H3.6L4.6 2H9.7V8.6H0Z" fill="#c4c4c4"/></svg>
<div class="t" style="left:37.7px;top:602px;font-size:9.8px;color:#c4c4c4;letter-spacing:0.15px;">2D Tilemap Editor</div>
<svg style="left:14.5px;top:614.12px;" width="4.5" height="6" viewBox="0 0 4.5 6"><path d="M0 0L4.5 3.0L0 6Z" fill="#7a7a7a"/></svg>
<svg style="left:24.8px;top:614.42px;" width="10" height="9" viewBox="0 0 10 9"><path d="M0 1H3.6L4.6 2H9.7V8.6H0Z" fill="#c4c4c4"/></svg>
<div class="t" style="left:37.7px;top:614px;font-size:9.8px;color:#c4c4c4;letter-spacing:0.15px;">2D Tilemap Extras</div>
<div class="a" style="left:162.5px;top:426.3px;width:753.5px;height:16px;background:#3e3e3e;"></div>
<div class="a" style="left:162.5px;top:442.3px;width:753.5px;height:0.8px;background:#2d2d2d;"></div>
<div class="a" style="left:0px;top:426px;width:916px;height:0.8px;background:#2a2a2a;"></div>
<div class="t" style="left:165.75px;top:431px;font-size:9.8px;color:#c4c4c4;letter-spacing:0.15px;">Assets</div>
<svg style="left:201.3px;top:431.5px;" width="4" height="7" viewBox="0 0 4 7"><path d="M0.5 0.5L3.5 3.5L0.5 6.5" fill="none" stroke="#a8a8a8" stroke-width="0.9"/></svg>
<div class="t" style="left:209.5px;top:431px;font-size:9.7px;color:#d8d8d8;font-weight:bold;letter-spacing:0.05px;">Prefabs</div>
<div class="t" style="left:496.7px;top:455px;font-size:9.8px;color:#858585;letter-spacing:0.15px;">This folder is empty</div>
<div class="a" style="left:162.5px;top:611.3px;width:753.5px;height:15.5px;background:#3e3e3e;"></div>
<div class="a" style="left:859.9px;top:619px;width:43.8px;height:1.4px;background:#2b2b2b;border-radius:1px"></div>
<div class="a" style="left:859.9px;top:618.8px;width:25px;height:1.4px;background:#8a8a8a;border-radius:1px"></div>
<svg style="left:880.8px;top:615px;" width="8" height="8" viewBox="0 0 8 8"><circle cx="4" cy="4" r="3.9" fill="#c8c8c8"/></svg>
<div class="a" style="left:917px;top:57px;width:283px;height:570px;background:#383838;"></div>
<div class="a" style="left:917px;top:57px;width:283px;height:15.5px;background:#262626;"></div>
<div class="a" style="left:917px;top:58px;width:74px;height:14.5px;background:#3c3c3c;border-radius:2px 2px 0 0"></div>
<svg style="left:923.8px;top:61.3px;" width="8.3" height="8.3" viewBox="0 0 8.3 8.3"><circle cx="4.15" cy="4.15" r="4.15" fill="#d0d0d0"/><rect x="3.5" y="3.4" width="1.4" height="3.4" fill="#3c3c3c"/><circle cx="4.2" cy="2.1" r="0.8" fill="#3c3c3c"/></svg>
<div class="t" style="left:935.6px;top:62px;font-size:9.8px;color:#c4c4c4;letter-spacing:0.15px;">Inspector</div>
<svg style="left:1171.8px;top:60.5px;" width="8" height="8" viewBox="0 0 8 8"><path d="M1.4 2.6A2.3 2.1 0 0 1 6 2.6V4" fill="none" stroke="#c4c4c4" stroke-width="1.1"/><rect x="0.9" y="4.2" width="6.4" height="3.2" rx="0.6" fill="none" stroke="#c4c4c4" stroke-width="1.1"/></svg>
<svg style="left:1187.8px;top:60.5px;" width="2" height="8" viewBox="0 0 2 8"><circle cx="1" cy="1" r="0.95" fill="#c4c4c4"/><circle cx="1" cy="4" r="0.95" fill="#c4c4c4"/><circle cx="1" cy="7" r="0.95" fill="#c4c4c4"/></svg>
<div class="a" style="left:917px;top:72px;width:273px;height:46px;background:#3e3e3e;"></div>
<div class="a" style="left:917px;top:118px;width:273px;height:1.2px;background:#2a2a2a;"></div>
<svg style="left:921.5px;top:80.3px;" width="16.5" height="16.5" viewBox="0 0 16.5 16.5"><g transform="scale(1.5714285714285714)" fill="none" stroke="#c4c4c4" stroke-width="0.8" stroke-linejoin="round"><path d="M5.25 0.6L9.9 3V8L5.25 10.2L0.6 8V3Z"/><path d="M0.6 3L5.25 5.4L9.9 3M5.25 5.4V10.2"/></g></svg>
<svg style="left:937.5px;top:97px;" width="5.5" height="3.4" viewBox="0 0 5.5 3.4"><path d="M0 0H5.5L2.75 3.4Z" fill="#c4c4c4"/></svg>
<div class="a" style="left:952.4px;top:80.5px;width:10.6px;height:11.8px;background:#2a2a2a;border-radius:2px"></div>
<svg style="left:954.3px;top:83.3px;" width="7" height="6" viewBox="0 0 7 6"><path d="M0.6 3.2L2.6 5.2L6.4 0.8" fill="none" stroke="#e6e6e6" stroke-width="1.2"/></svg>
<div class="a" style="left:968px;top:79.2px;width:158.5px;height:14.3px;background:#2a2a2a;border-radius:3px"></div>
<div class="t" style="left:970.7px;top:84px;font-size:9.7px;color:#d8d8d8;font-weight:bold;letter-spacing:0.05px;">Bullet</div>
<div class="a" style="left:1129.4px;top:81px;width:10.4px;height:11.3px;background:#2a2a2a;border-radius:2px"></div>
<div class="t" style="left:1143.5px;top:83px;font-size:9.8px;color:#c4c4c4;letter-spacing:0.15px;">Static</div>
<svg style="left:1179.4px;top:84.5px;" width="6.2" height="4" viewBox="0 0 6.2 4"><path d="M0 0H6.2L3.1 4Z" fill="#c4c4c4"/></svg>
<div class="t" style="left:950.5px;top:102px;font-size:9.8px;color:#c4c4c4;letter-spacing:0.15px;">Tag</div>
<div class="a" style="left:971px;top:99px;width:91px;height:13.2px;background:#4f4f4f;border-radius:3px"></div>
<div class="t" style="left:973.3px;top:102px;font-size:9.8px;color:#c4c4c4;letter-spacing:0.15px;">Untagged</div>
<svg style="left:1055px;top:104px;" width="6" height="3.8" viewBox="0 0 6 3.8"><path d="M0 0H6L3.0 3.8Z" fill="#c4c4c4"/></svg>
<div class="t" style="left:1073.75px;top:102px;font-size:9.8px;color:#c4c4c4;letter-spacing:0.15px;">Layer</div>
<div class="a" style="left:1103px;top:99px;width:83px;height:13.2px;background:#4f4f4f;border-radius:3px"></div>
<div class="t" style="left:1105.6px;top:102px;font-size:9.8px;color:#c4c4c4;letter-spacing:0.15px;">Default</div>
<svg style="left:1176px;top:104px;" width="6" height="3.8" viewBox="0 0 6 3.8"><path d="M0 0H6L3.0 3.8Z" fill="#c4c4c4"/></svg>
<div class="a" style="left:917px;top:119px;width:273px;height:16.5px;background:#3e3e3e;"></div>
<svg style="left:922.5px;top:125px;" width="5.2" height="4.6" viewBox="0 0 5.2 4.6"><path d="M0 0H5.2L2.6 4.6Z" fill="#7a7a7a"/></svg>
<svg style="left:933px;top:122px" width="12" height="10" viewBox="0 0 12 10"><path d="M5.8 1.3V4.8" stroke="#b8e04a" stroke-width="1.8" stroke-linecap="round"/><path d="M5.4 6.2L2.2 8.2" stroke="#4aa8f0" stroke-width="1.9" stroke-linecap="round"/><path d="M6.4 6.2L9.6 8" stroke="#f07048" stroke-width="1.9" stroke-linecap="round"/></svg>
<div class="t" style="left:963.9px;top:124px;font-size:9.7px;color:#d8d8d8;font-weight:bold;letter-spacing:0.05px;">Transform</div>
<svg style="left:1145px;top:124px;" width="8" height="8" viewBox="0 0 8 8"><circle cx="4" cy="4" r="4" fill="#d0d0d0"/><path d="M2.7 3A1.4 1.4 0 1 1 4.6 4.3C4.1 4.6 4 4.8 4 5.3" fill="none" stroke="#3e3e3e" stroke-width="1"/><circle cx="4" cy="6.6" r="0.55" fill="#3e3e3e"/></svg>
<svg style="left:1160.6px;top:123.5px;" width="8" height="9" viewBox="0 0 8 9"><path d="M0.3 2.5H4.2M4 6.6H7.8" stroke="#9a9a9a" stroke-width="0.8"/><path d="M4.6 0.6H5.6L7.6 2.5L5.6 4.4H4.6Z" fill="#d0d0d0"/><path d="M3.4 4.7H2.4L0.4 6.6L2.4 8.5H3.4Z" fill="#d0d0d0"/></svg>
<svg style="left:1179px;top:123px;" width="2" height="8" viewBox="0 0 2 8"><circle cx="1" cy="1" r="0.95" fill="#c4c4c4"/><circle cx="1" cy="4" r="0.95" fill="#c4c4c4"/><circle cx="1" cy="7" r="0.95" fill="#c4c4c4"/></svg>
<div class="t" style="left:932px;top:143px;font-size:9.8px;color:#c4c4c4;letter-spacing:0.15px;">Position</div>
<div class="t" style="left:932px;top:159px;font-size:9.8px;color:#c4c4c4;letter-spacing:0.15px;">Rotation</div>
<div class="t" style="left:932px;top:174px;font-size:9.8px;color:#c4c4c4;letter-spacing:0.15px;">Scale</div>
<svg style="left:1012px;top:174px;" width="10.5" height="7" viewBox="0 0 10.5 7"><path d="M3.6 1H2.5A2 2 0 0 0 2.5 5H3.6M6.9 1H8A2 2 0 0 1 8 5H6.9M3.8 3H6.7" fill="none" stroke="#c4c4c4" stroke-width="1"/><path d="M0.8 0L9.8 6.6" stroke="#383838" stroke-width="1.4"/><path d="M1.2 0.2L9.4 6.4" stroke="#c4c4c4" stroke-width="0.8"/></svg>
<div class="t" style="left:1029.8px;top:143px;font-size:9.8px;color:#c4c4c4;letter-spacing:0.15px;">X</div>
<div class="a" style="left:1041px;top:139.5px;width:37.5px;height:14.2px;background:#2a2a2a;border-radius:3px"></div>
<div class="t" style="left:1043.2px;top:143px;font-size:9.8px;color:#c4c4c4;letter-spacing:0.15px;">0</div>
<div class="t" style="left:1083.7px;top:143px;font-size:9.8px;color:#c4c4c4;letter-spacing:0.15px;">Y</div>
<div class="a" style="left:1095px;top:139.5px;width:37.4px;height:14.2px;background:#2a2a2a;border-radius:3px"></div>
<div class="t" style="left:1097.3px;top:143px;font-size:9.8px;color:#c4c4c4;letter-spacing:0.15px;">0</div>
<div class="t" style="left:1137px;top:143px;font-size:9.8px;color:#c4c4c4;letter-spacing:0.15px;">Z</div>
<div class="a" style="left:1148.2px;top:139.5px;width:38.2px;height:14.2px;background:#2a2a2a;border-radius:3px"></div>
<div class="t" style="left:1150.5px;top:143px;font-size:9.8px;color:#c4c4c4;letter-spacing:0.15px;">0</div>
<div class="t" style="left:1029.8px;top:159px;font-size:9.8px;color:#c4c4c4;letter-spacing:0.15px;">X</div>
<div class="a" style="left:1041px;top:155.5px;width:37.5px;height:13.5px;background:#2a2a2a;border-radius:3px"></div>
<div class="t" style="left:1043.2px;top:159px;font-size:9.8px;color:#c4c4c4;letter-spacing:0.15px;">0</div>
<div class="t" style="left:1083.7px;top:159px;font-size:9.8px;color:#c4c4c4;letter-spacing:0.15px;">Y</div>
<div class="a" style="left:1095px;top:155.5px;width:37.4px;height:13.5px;background:#2a2a2a;border-radius:3px"></div>
<div class="t" style="left:1097.3px;top:159px;font-size:9.8px;color:#c4c4c4;letter-spacing:0.15px;">0</div>
<div class="t" style="left:1137px;top:159px;font-size:9.8px;color:#c4c4c4;letter-spacing:0.15px;">Z</div>
<div class="a" style="left:1148.2px;top:155.5px;width:38.2px;height:13.5px;background:#2a2a2a;border-radius:3px"></div>
<div class="t" style="left:1150.5px;top:159px;font-size:9.8px;color:#c4c4c4;letter-spacing:0.15px;">0</div>
<div class="t" style="left:1029.8px;top:174px;font-size:9.8px;color:#c4c4c4;letter-spacing:0.15px;">X</div>
<div class="a" style="left:1041px;top:171.5px;width:37.5px;height:13px;background:#2a2a2a;border-radius:3px"></div>
<div class="t" style="left:1043.2px;top:174px;font-size:9.8px;color:#c4c4c4;letter-spacing:0.15px;">0.3</div>
<div class="t" style="left:1083.7px;top:174px;font-size:9.8px;color:#c4c4c4;letter-spacing:0.15px;">Y</div>
<div class="a" style="left:1095px;top:171.5px;width:37.4px;height:13px;background:#2a2a2a;border-radius:3px"></div>
<div class="t" style="left:1097.3px;top:174px;font-size:9.8px;color:#c4c4c4;letter-spacing:0.15px;">0.3</div>
<div class="t" style="left:1137px;top:174px;font-size:9.8px;color:#c4c4c4;letter-spacing:0.15px;">Z</div>
<div class="a" style="left:1148.2px;top:171.5px;width:38.2px;height:13px;background:#2a2a2a;border-radius:3px"></div>
<div class="t" style="left:1150.5px;top:174px;font-size:9.8px;color:#c4c4c4;letter-spacing:0.15px;">1</div>
<div class="a" style="left:917px;top:191.5px;width:273px;height:1.2px;background:#2a2a2a;"></div>
<div class="a" style="left:917px;top:192.7px;width:273px;height:16.5px;background:#3e3e3e;"></div>
<svg style="left:922.5px;top:198.7px;" width="5.2" height="4.6" viewBox="0 0 5.2 4.6"><path d="M0 0H5.2L2.6 4.6Z" fill="#7a7a7a"/></svg>
<svg style="left:933px;top:195px" width="11" height="11" viewBox="0 0 11 11"><path d="M0.8 1.2H10M0.8 1.2V9.6" stroke="#8d7ae0" stroke-width="0.8"/><g fill="#b8a8ff"><circle cx="0.8" cy="1.2" r="1"/><circle cx="10" cy="1.2" r="1"/><circle cx="0.8" cy="9.6" r="1"/></g><circle cx="6.6" cy="4.6" r="1.7" fill="#e6e6e6"/><ellipse cx="7" cy="8.3" rx="3" ry="2.1" fill="#e6e6e6"/><circle cx="7" cy="8.5" r="1" fill="#2a2a2a"/></svg>
<div class="a" style="left:948px;top:194.7px;width:11px;height:11px;background:#2a2a2a;border-radius:2px"></div>
<svg style="left:950px;top:197.7px;" width="7" height="6" viewBox="0 0 7 6"><path d="M0.6 3.2L2.6 5.2L6.4 0.8" fill="none" stroke="#e6e6e6" stroke-width="1.2"/></svg>
<div class="t" style="left:963.9px;top:198px;font-size:9.7px;color:#d8d8d8;font-weight:bold;letter-spacing:0.05px;">Sprite Renderer</div>
<svg style="left:1145px;top:197.7px;" width="8" height="8" viewBox="0 0 8 8"><circle cx="4" cy="4" r="4" fill="#d0d0d0"/><path d="M2.7 3A1.4 1.4 0 1 1 4.6 4.3C4.1 4.6 4 4.8 4 5.3" fill="none" stroke="#3e3e3e" stroke-width="1"/><circle cx="4" cy="6.6" r="0.55" fill="#3e3e3e"/></svg>
<svg style="left:1160.6px;top:197.2px;" width="8" height="9" viewBox="0 0 8 9"><path d="M0.3 2.5H4.2M4 6.6H7.8" stroke="#9a9a9a" stroke-width="0.8"/><path d="M4.6 0.6H5.6L7.6 2.5L5.6 4.4H4.6Z" fill="#d0d0d0"/><path d="M3.4 4.7H2.4L0.4 6.6L2.4 8.5H3.4Z" fill="#d0d0d0"/></svg>
<svg style="left:1179px;top:196.7px;" width="2" height="8" viewBox="0 0 2 8"><circle cx="1" cy="1" r="0.95" fill="#c4c4c4"/><circle cx="1" cy="4" r="0.95" fill="#c4c4c4"/><circle cx="1" cy="7" r="0.95" fill="#c4c4c4"/></svg>
<div class="t" style="left:932px;top:217px;font-size:9.8px;color:#c4c4c4;letter-spacing:0.15px;">Sprite</div>
<div class="t" style="left:932px;top:232px;font-size:9.8px;color:#c4c4c4;letter-spacing:0.15px;">Color</div>
<div class="t" style="left:932px;top:248px;font-size:9.8px;color:#c4c4c4;letter-spacing:0.15px;">Flip</div>
<div class="t" style="left:932px;top:263px;font-size:9.8px;color:#c4c4c4;letter-spacing:0.15px;">Draw Mode</div>
<div class="t" style="left:932px;top:279px;font-size:9.8px;color:#c4c4c4;letter-spacing:0.15px;">Mask Interaction</div>
<div class="t" style="left:932px;top:294px;font-size:9.8px;color:#c4c4c4;letter-spacing:0.15px;">Sprite Sort Point</div>
<div class="t" style="left:932px;top:310px;font-size:9.8px;color:#c4c4c4;letter-spacing:0.15px;">Material</div>
<div class="a" style="left:1029.5px;top:213px;width:156.5px;height:13.3px;background:#2a2a2a;border-radius:3px"></div>
<div class="a" style="left:1171.4px;top:213px;width:14.6px;height:13.3px;background:#303030;border-radius:0 3px 3px 0"></div>
<svg style="left:1172.8px;top:215.2px;" width="12" height="9" viewBox="0 0 12 9"><circle cx="6" cy="4.5" r="3.8" fill="none" stroke="#c4c4c4" stroke-width="0.9"/><circle cx="6" cy="4.5" r="1.5" fill="#c4c4c4"/></svg>
<svg style="left:1031px;top:215.5px;" width="9" height="9" viewBox="0 0 9 9"><path d="M0.5 2.5V0.5H2.5M6.5 0.5H8.5V2.5M8.5 6.5V8.5H6.5M2.5 8.5H0.5V6.5" fill="none" stroke="#9a7ae8" stroke-width="0.9"/><circle cx="4.5" cy="4.5" r="1.6" fill="#e0e0e0"/></svg>
<div class="t" style="left:1040.5px;top:217px;font-size:9.8px;color:#c4c4c4;letter-spacing:0.15px;">Circle</div>
<div class="a" style="left:1029.5px;top:228.7px;width:143.2px;height:10px;background:#e8d600;"></div>
<div class="a" style="left:1029.5px;top:238.7px;width:143.2px;height:3px;background:#ffffff;"></div>
<div class="a" style="left:1173.5px;top:228px;width:12.5px;height:14px;background:#303030;border-radius:2px"></div>
<svg style="left:1175.5px;top:230.5px;" width="9" height="9" viewBox="0 0 9 9"><path d="M0.6 8.4L5.4 3.6" stroke="#c4c4c4" stroke-width="1.8"/><path d="M4.2 2.4L6.6 4.8M5.2 3.4L7.4 1.2A1 1 0 0 1 8.6 2.6L6.4 4.8Z" stroke="#c4c4c4" stroke-width="1.2" fill="#c4c4c4"/></svg>
<div class="a" style="left:1029.5px;top:245px;width:9.5px;height:11.2px;background:#2a2a2a;border-radius:2px"></div>
<div class="t" style="left:1042.6px;top:247px;font-size:9.8px;color:#c4c4c4;letter-spacing:0.15px;">X</div>
<div class="a" style="left:1052.6px;top:245px;width:9.5px;height:11.2px;background:#2a2a2a;border-radius:2px"></div>
<div class="t" style="left:1065.6px;top:247px;font-size:9.8px;color:#c4c4c4;letter-spacing:0.15px;">Y</div>
<div class="a" style="left:1029.5px;top:260.5px;width:156.5px;height:12.6px;background:#4f4f4f;border-radius:3px"></div>
<div class="t" style="left:1031.8px;top:263px;font-size:9.8px;color:#c4c4c4;letter-spacing:0.15px;">Simple</div>
<svg style="left:1176.5px;top:265.7px;" width="5.8" height="3.8" viewBox="0 0 5.8 3.8"><path d="M0 0H5.8L2.9 3.8Z" fill="#c4c4c4"/></svg>
<div class="a" style="left:1029.5px;top:276.1px;width:156.5px;height:12.6px;background:#4f4f4f;border-radius:3px"></div>
<div class="t" style="left:1031.8px;top:279px;font-size:9.8px;color:#c4c4c4;letter-spacing:0.15px;">None</div>
<svg style="left:1176.5px;top:281.3px;" width="5.8" height="3.8" viewBox="0 0 5.8 3.8"><path d="M0 0H5.8L2.9 3.8Z" fill="#c4c4c4"/></svg>
<div class="a" style="left:1029.5px;top:291.7px;width:156.5px;height:12.6px;background:#4f4f4f;border-radius:3px"></div>
<div class="t" style="left:1031.8px;top:294px;font-size:9.8px;color:#c4c4c4;letter-spacing:0.15px;">Center</div>
<svg style="left:1176.5px;top:296.9px;" width="5.8" height="3.8" viewBox="0 0 5.8 3.8"><path d="M0 0H5.8L2.9 3.8Z" fill="#c4c4c4"/></svg>
<div class="a" style="left:1029.5px;top:305.6px;width:156.5px;height:14px;background:#2a2a2a;border-radius:3px"></div>
<div class="a" style="left:1171.4px;top:305.6px;width:14.6px;height:14px;background:#303030;border-radius:0 3px 3px 0"></div>
<svg style="left:1172.8px;top:308.2px;" width="12" height="9" viewBox="0 0 12 9"><circle cx="6" cy="4.5" r="3.8" fill="none" stroke="#c4c4c4" stroke-width="0.9"/><circle cx="6" cy="4.5" r="1.5" fill="#c4c4c4"/></svg>
<svg style="left:1031px;top:308.5px;" width="9" height="9" viewBox="0 0 9 9"><circle cx="4.5" cy="4.5" r="4.2" fill="#5ab0e8"/><circle cx="3.8" cy="3.8" r="2.5" fill="#8fd0f8"/><path d="M2 8A4 4 0 0 0 8.5 3" fill="none" stroke="#244a66" stroke-width="1"/></svg>
<div class="t" style="left:1040.5px;top:310px;font-size:9.8px;color:#c4c4c4;letter-spacing:0.15px;">Sprites-Default</div>
<svg style="left:922.5px;top:326px;" width="5.2" height="4.6" viewBox="0 0 5.2 4.6"><path d="M0 0H5.2L2.6 4.6Z" fill="#7a7a7a"/></svg>
<div class="t" style="left:933px;top:325px;font-size:9.7px;color:#d2d2d2;font-weight:bold;letter-spacing:0.05px;">Additional Settings</div>
<div class="t" style="left:943.9px;top:341px;font-size:9.8px;color:#c4c4c4;letter-spacing:0.15px;">Sorting Layer</div>
<div class="a" style="left:1029.5px;top:338px;width:156.5px;height:12.6px;background:#4f4f4f;border-radius:3px"></div>
<div class="t" style="left:1031.8px;top:341px;font-size:9.8px;color:#c4c4c4;letter-spacing:0.15px;">Default</div>
<svg style="left:1176.5px;top:343.2px;" width="5.8" height="3.8" viewBox="0 0 5.8 3.8"><path d="M0 0H5.8L2.9 3.8Z" fill="#c4c4c4"/></svg>
<div class="t" style="left:943.9px;top:357px;font-size:9.8px;color:#c4c4c4;letter-spacing:0.15px;">Order in Layer</div>
<div class="a" style="left:1029.5px;top:353.5px;width:156.5px;height:13.5px;background:#2a2a2a;border-radius:3px"></div>
<div class="t" style="left:1031.8px;top:357px;font-size:9.8px;color:#c4c4c4;letter-spacing:0.15px;">0</div>
<div class="a" style="left:917px;top:374.8px;width:273px;height:1.2px;background:#2a2a2a;"></div>
<div class="a" style="left:917px;top:376px;width:273px;height:16.5px;background:#3e3e3e;"></div>
<svg style="left:922.5px;top:382px;" width="5.2" height="4.6" viewBox="0 0 5.2 4.6"><path d="M0 0H5.2L2.6 4.6Z" fill="#7a7a7a"/></svg>
<svg style="left:932.5px;top:378px" width="12" height="12" viewBox="0 0 12 12"><circle cx="6" cy="6" r="5.4" fill="#a8e05a" stroke="#1a1a1a" stroke-width="0.6"/><path d="M6 0.6A5.4 5.4 0 0 1 11.4 6H6Z" fill="#1e1e1e"/><path d="M6 11.4A5.4 5.4 0 0 1 0.6 6H6Z" fill="#1e1e1e"/><circle cx="6" cy="6" r="5.4" fill="none" stroke="#a8e05a" stroke-width="0.8"/></svg>
<div class="t" style="left:963.9px;top:381px;font-size:9.7px;color:#d8d8d8;font-weight:bold;letter-spacing:0.05px;">Rigidbody 2D</div>
<svg style="left:1145px;top:381px;" width="8" height="8" viewBox="0 0 8 8"><circle cx="4" cy="4" r="4" fill="#d0d0d0"/><path d="M2.7 3A1.4 1.4 0 1 1 4.6 4.3C4.1 4.6 4 4.8 4 5.3" fill="none" stroke="#3e3e3e" stroke-width="1"/><circle cx="4" cy="6.6" r="0.55" fill="#3e3e3e"/></svg>
<svg style="left:1160.6px;top:380.5px;" width="8" height="9" viewBox="0 0 8 9"><path d="M0.3 2.5H4.2M4 6.6H7.8" stroke="#9a9a9a" stroke-width="0.8"/><path d="M4.6 0.6H5.6L7.6 2.5L5.6 4.4H4.6Z" fill="#d0d0d0"/><path d="M3.4 4.7H2.4L0.4 6.6L2.4 8.5H3.4Z" fill="#d0d0d0"/></svg>
<svg style="left:1179px;top:380px;" width="2" height="8" viewBox="0 0 2 8"><circle cx="1" cy="1" r="0.95" fill="#c4c4c4"/><circle cx="1" cy="4" r="0.95" fill="#c4c4c4"/><circle cx="1" cy="7" r="0.95" fill="#c4c4c4"/></svg>
<div class="t" style="left:932px;top:400px;font-size:9.8px;color:#c4c4c4;letter-spacing:0.15px;">Body Type</div>
<div class="t" style="left:932px;top:415px;font-size:9.8px;color:#c4c4c4;letter-spacing:0.15px;">Material</div>
<div class="t" style="left:932px;top:431px;font-size:9.8px;color:#c4c4c4;letter-spacing:0.15px;">Simulated</div>
<div class="t" style="left:932px;top:447px;font-size:9.8px;color:#c4c4c4;letter-spacing:0.15px;">Use Auto Mass</div>
<div class="t" style="left:932px;top:462px;font-size:9.8px;color:#c4c4c4;letter-spacing:0.15px;">Mass</div>
<div class="t" style="left:932px;top:478px;font-size:9.8px;color:#c4c4c4;letter-spacing:0.15px;">Linear Drag</div>
<div class="t" style="left:932px;top:493px;font-size:9.8px;color:#c4c4c4;letter-spacing:0.15px;">Angular Drag</div>
<div class="t" style="left:932px;top:509px;font-size:9.8px;color:#c4c4c4;letter-spacing:0.15px;">Gravity Scale</div>
<div class="t" style="left:932px;top:525px;font-size:9.8px;color:#c4c4c4;letter-spacing:0.15px;">Collision Detection</div>
<div class="t" style="left:932px;top:540px;font-size:9.8px;color:#c4c4c4;letter-spacing:0.15px;">Sleeping Mode</div>
<div class="t" style="left:932px;top:556px;font-size:9.8px;color:#c4c4c4;letter-spacing:0.15px;">Interpolate</div>
<div class="a" style="left:1029.5px;top:397px;width:156.5px;height:12.6px;background:#4f4f4f;border-radius:3px"></div>
<div class="t" style="left:1031.8px;top:400px;font-size:9.8px;color:#c4c4c4;letter-spacing:0.15px;">Dynamic</div>
<svg style="left:1176.5px;top:402.2px;" width="5.8" height="3.8" viewBox="0 0 5.8 3.8"><path d="M0 0H5.8L2.9 3.8Z" fill="#c4c4c4"/></svg>
<div class="a" style="left:1029.5px;top:412px;width:156.5px;height:13.5px;background:#2a2a2a;border-radius:3px"></div>
<div class="a" style="left:1171.4px;top:412px;width:14.6px;height:13.5px;background:#303030;border-radius:0 3px 3px 0"></div>
<svg style="left:1172.8px;top:414.3px;" width="12" height="9" viewBox="0 0 12 9"><circle cx="6" cy="4.5" r="3.8" fill="none" stroke="#c4c4c4" stroke-width="0.9"/><circle cx="6" cy="4.5" r="1.5" fill="#c4c4c4"/></svg>
<div class="t" style="left:1031.5px;top:415px;font-size:9.8px;color:#c4c4c4;letter-spacing:0.15px;">None (Physics Material 2D)</div>
<div class="a" style="left:1029px;top:429.4px;width:10px;height:10.6px;background:#2a2a2a;border-radius:2px"></div>
<svg style="left:1030.8px;top:432px;" width="7" height="6" viewBox="0 0 7 6"><path d="M0.6 3.2L2.6 5.2L6.4 0.8" fill="none" stroke="#e6e6e6" stroke-width="1.2"/></svg>
<div class="a" style="left:1029px;top:445px;width:10px;height:10.6px;background:#2a2a2a;border-radius:2px"></div>
<div class="a" style="left:1029.5px;top:458.1px;width:156.5px;height:13.8px;background:#2a2a2a;border-radius:3px"></div>
<div class="t" style="left:1031.5px;top:462px;font-size:9.8px;color:#c4c4c4;letter-spacing:0.15px;">1</div>
<div class="a" style="left:1029.5px;top:473.68px;width:156.5px;height:13.8px;background:#2a2a2a;border-radius:3px"></div>
<div class="t" style="left:1031.5px;top:477px;font-size:9.8px;color:#c4c4c4;letter-spacing:0.15px;">0</div>
<div class="a" style="left:1029.5px;top:489.26000000000005px;width:156.5px;height:13.8px;background:#2a2a2a;border-radius:3px"></div>
<div class="t" style="left:1031.5px;top:493px;font-size:9.8px;color:#c4c4c4;letter-spacing:0.15px;">0.05</div>
<div class="a" style="left:1029.5px;top:504.84000000000003px;width:156.5px;height:13.8px;background:#2a2a2a;border-radius:3px"></div>
<div class="t" style="left:1031.5px;top:508px;font-size:9.8px;color:#c4c4c4;letter-spacing:0.15px;">0</div>
<div class="a" style="left:1029.5px;top:521.5px;width:156.5px;height:12.6px;background:#4f4f4f;border-radius:3px"></div>
<div class="t" style="left:1031.8px;top:524px;font-size:9.8px;color:#c4c4c4;letter-spacing:0.15px;">Discrete</div>
<svg style="left:1176.5px;top:526.7px;" width="5.8" height="3.8" viewBox="0 0 5.8 3.8"><path d="M0 0H5.8L2.9 3.8Z" fill="#c4c4c4"/></svg>
<div class="a" style="left:1029.5px;top:537.1px;width:156.5px;height:12.6px;background:#4f4f4f;border-radius:3px"></div>
<div class="t" style="left:1031.8px;top:540px;font-size:9.8px;color:#c4c4c4;letter-spacing:0.15px;">Start Awake</div>
<svg style="left:1176.5px;top:542.3000000000001px;" width="5.8" height="3.8" viewBox="0 0 5.8 3.8"><path d="M0 0H5.8L2.9 3.8Z" fill="#c4c4c4"/></svg>
<div class="a" style="left:1029.5px;top:552.7px;width:156.5px;height:12.6px;background:#4f4f4f;border-radius:3px"></div>
<div class="t" style="left:1031.8px;top:555px;font-size:9.8px;color:#c4c4c4;letter-spacing:0.15px;">None</div>
<svg style="left:1176.5px;top:557.9000000000001px;" width="5.8" height="3.8" viewBox="0 0 5.8 3.8"><path d="M0 0H5.8L2.9 3.8Z" fill="#c4c4c4"/></svg>
<svg style="left:922.5px;top:572px;" width="5.2" height="4.6" viewBox="0 0 5.2 4.6"><path d="M0 0H5.2L2.6 4.6Z" fill="#7a7a7a"/></svg>
<div class="t" style="left:932px;top:571px;font-size:9.8px;color:#c4c4c4;letter-spacing:0.15px;">Constraints</div>
<div class="t" style="left:943.9px;top:587px;font-size:9.8px;color:#c4c4c4;letter-spacing:0.15px;">Freeze Position</div>
<div class="t" style="left:943.9px;top:603px;font-size:9.8px;color:#c4c4c4;letter-spacing:0.15px;">Freeze Rotation</div>
<div class="a" style="left:1029px;top:584.5px;width:10px;height:11px;background:#2a2a2a;border-radius:2px"></div>
<div class="t" style="left:1042.3px;top:587px;font-size:9.8px;color:#c4c4c4;letter-spacing:0.15px;">X</div>
<div class="a" style="left:1052.3px;top:584.5px;width:10px;height:11px;background:#2a2a2a;border-radius:2px"></div>
<div class="t" style="left:1065.3px;top:587px;font-size:9.8px;color:#c4c4c4;letter-spacing:0.15px;">Y</div>
<div class="a" style="left:1029px;top:600.2px;width:10px;height:11px;background:#2a2a2a;border-radius:2px"></div>
<div class="t" style="left:1042.3px;top:603px;font-size:9.8px;color:#c4c4c4;letter-spacing:0.15px;">Z</div>
<svg style="left:1030.8px;top:603px;" width="7" height="6" viewBox="0 0 7 6"><path d="M0.6 3.2L2.6 5.2L6.4 0.8" fill="none" stroke="#e6e6e6" stroke-width="1.2"/></svg>
<svg style="left:923px;top:618.3px;" width="4.6" height="6" viewBox="0 0 4.6 6"><path d="M0 0L4.6 3.0L0 6Z" fill="#7a7a7a"/></svg>
<div class="t" style="left:932px;top:618px;font-size:9.8px;color:#c4c4c4;letter-spacing:0.15px;">Info</div>
<div class="a" style="left:1189.5px;top:72px;width:10.5px;height:555px;background:#333333;"></div>
<div class="a" style="left:1191.5px;top:85.6px;width:7.6px;height:351px;background:#5a5a5a;border-radius:4px"></div>
<svg style="left:1192.3px;top:77.3px;" width="6" height="4" viewBox="0 0 6 4"><path d="M0 3.8H6L3 0Z" fill="#c4c4c4"/></svg>
<svg style="left:1192.3px;top:619.5px;" width="6" height="4" viewBox="0 0 6 4"><path d="M0 0H6L3 3.8Z" fill="#c4c4c4"/></svg>
<div class="a" style="left:0px;top:627px;width:1200px;height:17px;background:#191919;"></div>
<svg style="left:2.3px;top:630px;" width="10.5" height="10" viewBox="0 0 10.5 10"><path d="M5.25 0.3L10.3 9.6H0.2Z" fill="#e8b820"/><rect x="4.65" y="3.2" width="1.2" height="3.6" fill="#191919"/><rect x="4.65" y="7.6" width="1.2" height="1.2" fill="#191919"/></svg>
<div class="t" style="left:15.7px;top:633px;font-size:9.8px;color:#d8b43c;letter-spacing:0.15px;">Project path contains special characters, which can be an issue when opening Visual Studio</div>
<svg style="left:1122.5px;top:630.5px;" width="11.5" height="11" viewBox="0 0 11.5 11"><ellipse cx="5.8" cy="6.5" rx="3.3" ry="4" fill="#c8c8c8"/><circle cx="5.8" cy="2" r="1.8" fill="#c8c8c8"/><path d="M1 3L3 4.6M10.6 3L8.6 4.6M0.6 6.6H2.6M11 6.6H9M1 10L3 8.6M10.6 10L8.6 8.6" stroke="#c8c8c8" stroke-width="0.9"/><path d="M0.5 0.5L11 10.8" stroke="#191919" stroke-width="1.6"/><path d="M0.8 0.5L11 10.5" stroke="#c8c8c8" stroke-width="0.8"/></svg>
<svg style="left:1143px;top:630.5px;" width="11" height="11" viewBox="0 0 11 11"><ellipse cx="5" cy="2.2" rx="4.5" ry="1.8" fill="#c8c8c8"/><path d="M0.5 3.8A4.5 1.8 0 0 0 9.5 3.8V5.6A4.5 1.8 0 0 1 0.5 5.6Z" fill="#c8c8c8"/><path d="M0.5 7.2A4.5 1.8 0 0 0 9.5 7.2V9A4.5 1.8 0 0 1 0.5 9Z" fill="#c8c8c8"/><path d="M1.5 1L10.5 10.5" stroke="#191919" stroke-width="1.6"/><path d="M1.8 1L10.6 10.2" stroke="#c8c8c8" stroke-width="0.8"/></svg>
<svg style="left:1163.3px;top:630.5px;" width="11" height="11" viewBox="0 0 11 11"><path d="M9.4 3.2A4.6 4.6 0 0 0 1.4 4.2M1.6 7.8A4.6 4.6 0 0 0 9.6 6.8" fill="none" stroke="#c8c8c8" stroke-width="1"/><rect x="4" y="3.8" width="3" height="3.4" fill="#c8c8c8"/><path d="M1 0.6L10.4 10.6" stroke="#191919" stroke-width="1.6"/><path d="M1.2 0.6L10.4 10.4" stroke="#c8c8c8" stroke-width="0.8"/></svg>
<svg style="left:1182.9px;top:631px;" width="12" height="11" viewBox="0 0 12 11"><circle cx="6" cy="5.5" r="5" fill="none" stroke="#c8c8c8" stroke-width="0.9"/><path d="M3.5 5.6L5.3 7.4L8.6 3.8" fill="none" stroke="#c8c8c8" stroke-width="1.1"/></svg></div></body></html>
